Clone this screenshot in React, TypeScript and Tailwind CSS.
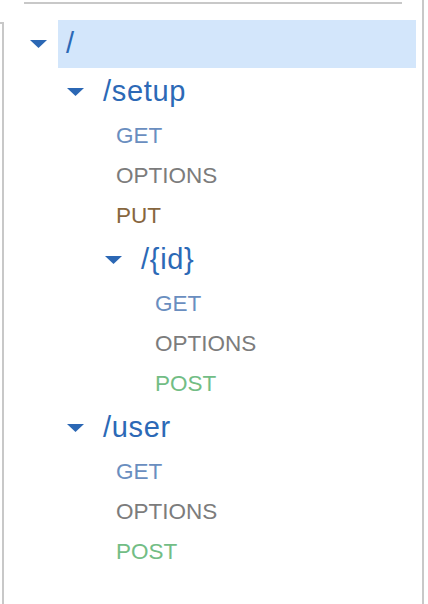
import React from 'react';

type Method = 'GET' | 'OPTIONS' | 'PUT' | 'POST';

type Node = {
  path: string;
  depth: number;
  selected?: boolean;
  methods: Method[];
  children: Node[];
};

const tree: Node = {
  path: '/',
  depth: 0,
  selected: true,
  methods: [],
  children: [
    {
      path: '/setup',
      depth: 1,
      methods: ['GET', 'OPTIONS', 'PUT'],
      children: [{ path: '/{id}', depth: 2, methods: ['GET', 'OPTIONS', 'POST'], children: [] }],
    },
    { path: '/user', depth: 1, methods: ['GET', 'OPTIONS', 'POST'], children: [] },
  ],
};

const methodColor: Record<Method, string> = {
  GET: 'text-[#6a8ebf]',
  OPTIONS: 'text-[#7c7c7c]',
  PUT: 'text-[#87663e]',
  POST: 'text-[#72bd85]',
};

// 階層ごとのインデント（クラス名は完全な文字列で持つ）
const pathIndent = ['pl-[26px]', 'pl-[63px]', 'pl-[101px]'];
const methodIndent = ['pl-[74px]', 'pl-[112px]', 'pl-[151px]'];

function Caret() {
  return (
    <svg width="17" height="8" viewBox="0 0 17 8" className="shrink-0">
      <polygon points="0,0 17,0 8.5,8" fill="#2b67b4" />
    </svg>
  );
}

function ResourceRow({ node }: { node: Node }) {
  return (
    <>
      <div className={`flex h-12 items-center ${pathIndent[node.depth]}`}>
        <Caret />
        <div
          className={`ml-[11px] mr-[6px] flex h-12 flex-1 items-center pl-[8px] ${
            node.selected ? 'bg-[#d3e6fb]' : ''
          }`}
        >
          <span className="text-[29px] tracking-[0.7px] text-[#2c69b6]">{node.path}</span>
        </div>
      </div>
      {node.methods.map((m) => (
        <div key={m} className={`flex h-10 items-center ${methodIndent[node.depth]}`}>
          <span className={`text-[22.5px] ${methodColor[m]}`}>{m}</span>
        </div>
      ))}
      {node.children.map((c) => (
        <ResourceRow key={c.path} node={c} />
      ))}
    </>
  );
}

export default function App() {
  return (
    <div
      className="flex h-[604px] w-[424px] flex-col overflow-hidden border-r-2 border-[#c8c8c8] bg-white"
      style={{ fontFamily: '"Liberation Sans", Arial, sans-serif' }}
    >
      {/* 上部の区切り線 */}
      <div className="ml-[24px] mt-[2px] h-[2px] w-[378px] shrink-0 bg-[#c8c8c8]" />

      <div className="flex flex-1">
        {/* 左パネルの端 */}
        <div className="mt-[18px] w-[4px] shrink-0 border-r-2 border-t-2 border-[#c8c8c8]" />

        <div className="mt-[16px] flex flex-1 flex-col">
          <ResourceRow node={tree} />
        </div>
      </div>
    </div>
  );
}
